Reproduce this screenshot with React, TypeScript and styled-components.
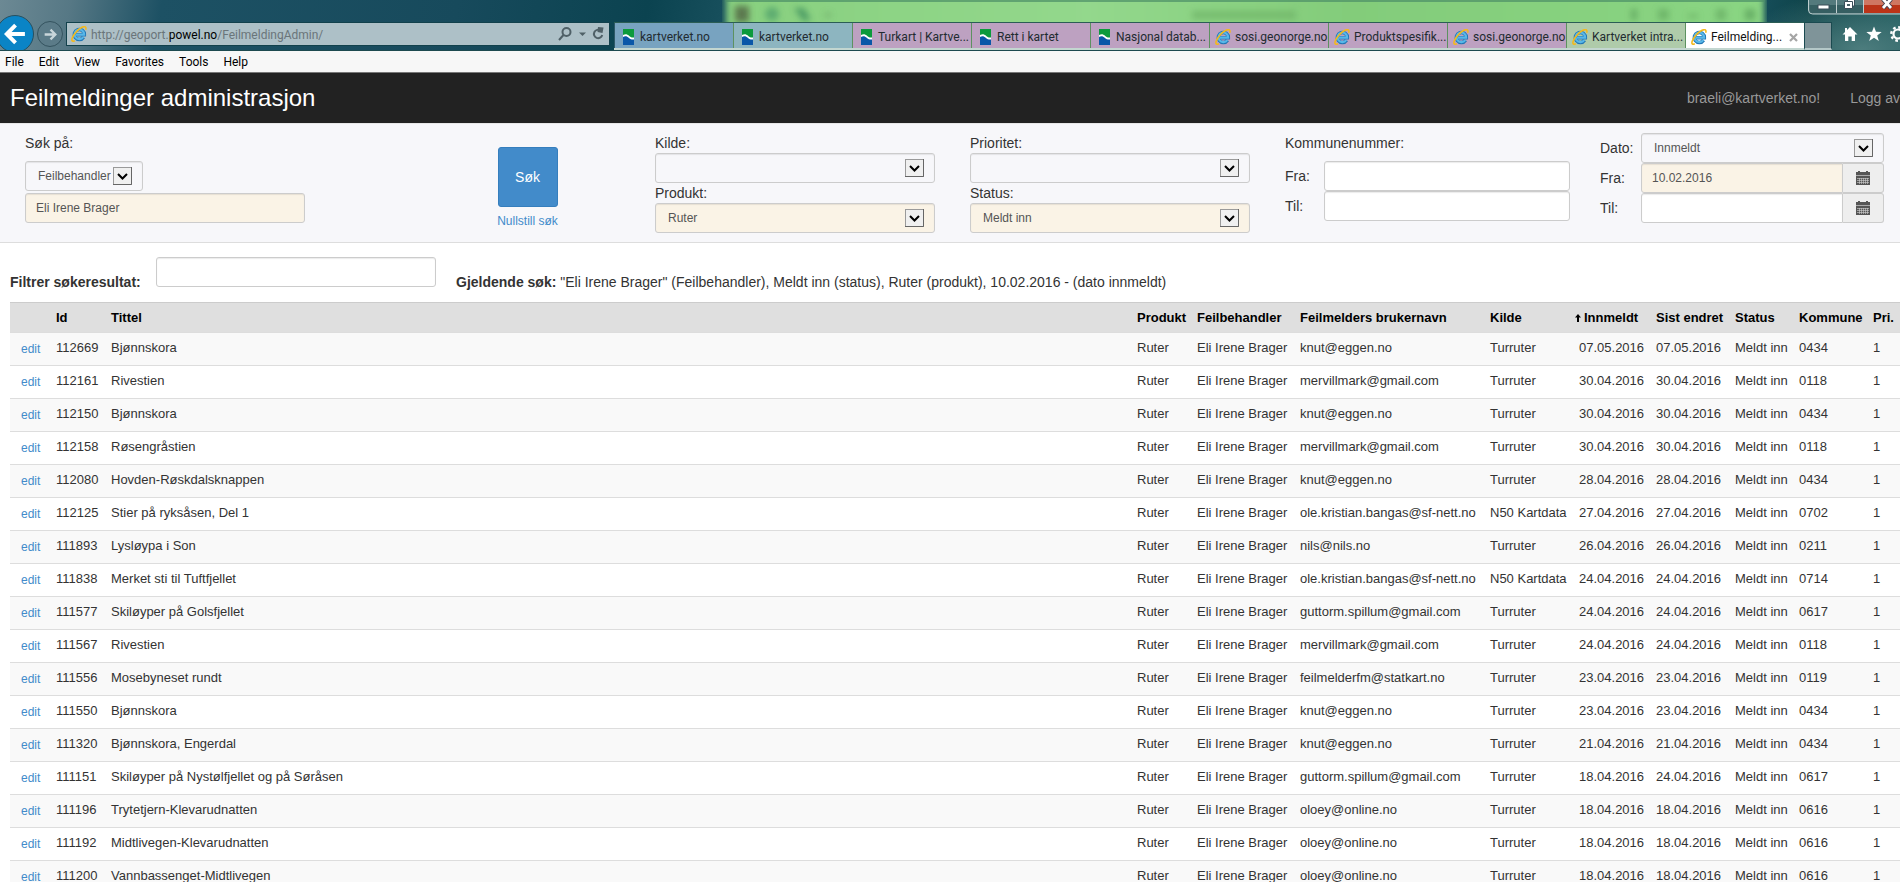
import React, { useState } from "react";
import styled, { createGlobalStyle, css } from "styled-components";

const GlobalStyle = createGlobalStyle`
  *, *::before, *::after { box-sizing: border-box; }
  body {
    margin: 0;
    background: #fff;
    color: #333;
    font-family: "Liberation Sans", Arial, sans-serif;
    font-size: 14px;
    line-height: 20px;
  }
  button, input, select { font-family: inherit; }
`;

/* ---------- browser frame ---------- */

const Page = styled.div`
  display: flex;
  flex-direction: column;
  height: 100vh;
  overflow: hidden;
`;

const Chrome = styled.header`
  position: relative;
  flex: none;
  display: flex;
  align-items: flex-end;
  height: 51px;
  padding-top: 22px;
  overflow: hidden;
  font-family: Roboto, "Open Sans", sans-serif;
  font-size: 12px;
  line-height: 16px;
  border-bottom: 1px solid #1d4a50;
  background:
    radial-gradient(ellipse 120px 60px at 98% 100%, #4d7d7e, transparent),
    linear-gradient(100deg, #6c8994 0, #567885 70px, #1d5164 160px, #174a5c 24%, #0b4350 34%, #174f5c 38%, #174f5c 92%, #0d4247 95%, #1c5a5c 100%);
`;

const Glass = styled.svg`
  position: absolute;
  left: 38%;
  top: 0;
  width: 55%;
  height: 50px;
`;

const NavButtons = styled.div`
  position: relative;
  flex: none;
  width: 66px;
  height: 28px;
`;

const RoundButton = styled.button<{ $main?: boolean }>`
  position: absolute;
  left: ${(p) => (p.$main ? "-4px" : "37px")};
  top: ${(p) => (p.$main ? "-7px" : "-1px")};
  display: grid;
  place-items: center;
  width: ${(p) => (p.$main ? 38 : 26)}px;
  height: ${(p) => (p.$main ? 38 : 26)}px;
  padding: 0;
  border: 1px solid ${(p) => (p.$main ? "#28505f" : "#34535f")};
  border-radius: 50%;
  background: ${(p) => (p.$main ? "#0a84c6" : "#5b7b88")};
`;

const AddressBar = styled.div`
  position: relative;
  flex: 1;
  display: flex;
  align-items: center;
  gap: 4px;
  min-width: 120px;
  height: 24px;
  margin: 0 4px 4px 0;
  padding: 0 5px 0 4px;
  border: 1px solid #12414c;
  background: #adc0c7;
`;

const Url = styled.div`
  flex: 1;
  padding-top: 2px;
  color: #6a757a;
  white-space: nowrap;
  overflow: hidden;

  b {
    font-weight: 400;
    color: #000;
  }
`;

const IconButton = styled.button`
  display: grid;
  place-items: center;
  flex: none;
  padding: 0;
  border: 0;
  background: none;
`;

const Tabs = styled.nav`
  position: relative;
  display: flex;
  height: 28px;
  border-top: 1px solid #2b5d55;
  border-bottom: 2px solid #c3d6d0;
`;

const tones = {
  blue: "#78a3c0",
  teal: "#8db5c0",
  mauve: "#bda1c1",
  green: "#afcbaa",
  active: "#ffffff",
};

const Tab = styled.a<{ $tone: keyof typeof tones }>`
  display: flex;
  align-items: center;
  gap: 4px;
  width: 119px;
  padding: 3px 0 0 5px;
  border-left: 1px solid ${(p) => (p.$tone === "blue" ? "#2d5968" : "#5d9160")};
  background: ${(p) => tones[p.$tone]};
  color: ${(p) => (p.$tone === "active" ? "#111" : "#222b30")};
  text-decoration: none;
  white-space: nowrap;

  svg { flex: none; }
`;

const TabClose = styled.button`
  display: grid;
  place-items: center;
  margin-left: auto;
  margin-right: 6px;
  padding: 0;
  border: 0;
  background: none;
`;

const NewTab = styled.button`
  position: relative;
  flex: none;
  width: 28px;
  height: 28px;
  padding: 0;
  border: 1px solid #1b4a50;
  border-bottom: 2px solid #b5c8c8;
  background: #7f9499;
`;

const Tools = styled.div`
  position: relative;
  flex: none;
  display: flex;
  align-items: center;
  gap: 8px;
  width: 68px;
  height: 28px;
  padding: 0 0 4px 10px;
  overflow: hidden;
`;

const WindowButtons = styled.svg`
  position: absolute;
  right: 0;
  top: 0;
  width: 94px;
  height: 16px;
`;

const MenuBar = styled.nav`
  flex: none;
  display: flex;
  align-items: center;
  gap: 15px;
  height: 22px;
  padding-left: 5px;
  border-bottom: 1px solid #777;
  background: #f7f7f7;
`;

const MenuItem = styled.button`
  padding: 0;
  border: 0;
  background: none;
  color: #000;
  font-family: Roboto, "Open Sans", sans-serif;
  font-size: 12px;
  line-height: 20px;
`;

/* ---------- application ---------- */

const Navbar = styled.div`
  flex: none;
  display: flex;
  align-items: center;
  gap: 30px;
  height: 50px;
  padding-left: 10px;
  background: #222;
`;

const Brand = styled.h1`
  flex: 1;
  margin: 0;
  padding-bottom: 1px;
  color: #fff;
  font-size: 24px;
  font-weight: 400;
  line-height: 30px;
`;

const NavLink = styled.a`
  color: #999;
  text-decoration: none;
  white-space: nowrap;
`;

const SearchPanel = styled.form`
  flex: none;
  display: grid;
  grid-template-columns: repeat(6, 1fr);
  padding: 9px 0 9px 10px;
  border-top: 1px solid #e7e7e7;
  border-bottom: 1px solid #ddd;
  background: #f7f7fa;
`;

const Column = styled.div`
  display: flex;
  flex-direction: column;
  align-items: stretch;
  padding: 0 20px 0 15px;
`;

const ActionColumn = styled(Column)`
  align-items: center;
  gap: 4px;
  padding: 14px 0 0 90px;
`;

const NumberColumn = styled(Column)`
  padding-right: 15px;
`;

const DateColumn = styled(Column)`
  padding-right: 16px;
`;

const Label = styled.label`
  height: 20px;
`;

const Stack = styled.div<{ $gap?: number }>`
  display: flex;
  flex-direction: column;
  align-items: stretch;
  gap: ${(p) => p.$gap ?? 0}px;
  margin-top: 8px;
`;

const Line = styled.div<{ $label: number }>`
  display: grid;
  grid-template-columns: ${(p) => p.$label}px 1fr;
  align-items: center;
`;

const field = css<{ $filled?: boolean }>`
  height: 30px;
  border: 1px solid #ccc;
  border-radius: 3px;
  box-shadow: inset 0 1px 1px rgba(0, 0, 0, 0.08);
  color: #555;
  font-size: 12px;
  line-height: 18px;
  outline: none;
`;

const TextInput = styled.input<{ $filled?: boolean }>`
  ${field}
  width: 100%;
  min-width: 0;
  padding: 4px 10px 5px;
  background: ${(p) => (p.$filled ? "#faf3e6" : "#fff")};
`;

const SelectBox = styled.div<{ $fit?: boolean }>`
  position: relative;
  display: flex;
  width: ${(p) => (p.$fit ? "118px" : "auto")};

  svg {
    position: absolute;
    right: 11px;
    top: 6px;
    pointer-events: none;
  }
`;

const SelectInput = styled.select<{ $filled?: boolean }>`
  ${field}
  appearance: none;
  width: 100%;
  padding: 4px 30px 5px 12px;
  background: ${(p) => (p.$filled ? "#faf3e6" : "#f7f7fa")};
`;

const InputGroup = styled.div`
  display: flex;

  ${TextInput} {
    flex: 1;
    border-radius: 3px 0 0 3px;
  }
`;

const Addon = styled.button`
  display: grid;
  place-items: center;
  width: 41px;
  height: 30px;
  padding: 0;
  border: 1px solid #ccc;
  border-left: 0;
  border-radius: 0 3px 3px 0;
  background: #eee;
`;

const SearchButton = styled.button`
  width: 60px;
  height: 60px;
  border: 1px solid #357ebd;
  border-radius: 3px;
  background: #428bca;
  color: #fff;
  font-size: 14px;
`;

const SmallLink = styled.a`
  color: #428bca;
  font-size: 12px;
  text-decoration: none;
`;

const FilterBar = styled.div`
  flex: none;
  display: flex;
  align-items: flex-end;
  height: 59px;
  padding: 0 10px 15px;
`;

const FilterLabel = styled.label`
  width: 146px;
  height: 15px;
  font-weight: 700;
  white-space: nowrap;
`;

const FilterInput = styled.div`
  width: 280px;
  height: 30px;
`;

const Summary = styled.p`
  height: 15px;
  margin: 0 0 0 20px;
  white-space: nowrap;
`;

const TableWrap = styled.main`
  flex: 1;
  min-height: 0;
  padding-left: 10px;
  overflow: hidden;
`;

const Table = styled.table`
  width: 100%;
  table-layout: fixed;
  border-collapse: separate;
  border-spacing: 0;
  font-size: 13px;
  white-space: nowrap;
`;

const Th = styled.th<{ $sorted?: boolean }>`
  height: 30px;
  padding: 5px 0 4px ${(p) => (p.$sorted ? 1 : 5)}px;
  border-top: 1px solid #ccc;
  background: #dfdfdf;
  color: #000;
  text-align: left;

  svg { margin-right: 3px; }
`;

const Row = styled.tr`
  &:nth-child(odd) { background: #f9f9f9; }
`;

const Td = styled.td`
  height: 33px;
  padding: 5px 0 7px 5px;
  border-top: 1px solid #ddd;
`;

const EditCell = styled(Td)`
  padding: 6px 0 6px 11px;
`;

/* ---------- icons ---------- */

const KartverketIcon = () => (
  <svg width="16" height="16" viewBox="0 0 16 16" aria-hidden="true">
    <path d="M3 0h11v16H3z" fill="#fff" />
    <path d="M3 0h11v8.500c-2.500.3-3.600-.5-5-1.700C7 5 5.500 4.800 3 6z" fill="#0c9a3c" />
    <path d="M3 8c2.500-1.200 4-.6 6 1 1.500 1.300 3 1.800 5 1.500V16H3z" fill="#0a57a8" />
  </svg>
);

const IeIcon = () => (
  <svg width="16" height="16" viewBox="0 0 16 16" fill="none" aria-hidden="true">
    <path d="M12.500 11.200A5 5 0 1 1 13.300 8.700H4.500" stroke="#2277b5" strokeWidth="3.600" />
    <path d="M12.300 11A4.800 4.800 0 1 1 13.100 8.700H5" stroke="#58b7e8" strokeWidth="2.200" />
    <path d="M3.800 14.800C1.500 16 .2 14.800 1.300 12 2.600 8.500 7 3.300 11 1.300c3-1.400 4.600-.6 3.700 2.400" stroke="#f3b91c" strokeWidth="1.600" />
  </svg>
);

const Arrow = ({ size, flip, color }: { size: number; flip?: boolean; color: string }) => (
  <svg width={size} height={size} viewBox="0 0 20 20" fill="none" stroke={color} strokeWidth="3.600" aria-hidden="true">
    {flip ? <path d="M1 10h16M10 2.500l7.500 7.500-7.500 7.500" /> : <path d="M19 10H3M10.500 2L2.500 10l8 8" />}
  </svg>
);

const DropArrow = () => (
  <svg width="19" height="18" viewBox="0 0 19 18" fill="none" aria-hidden="true">
    <rect x=".5" y=".5" width="18" height="17" fill="#f0f0f0" stroke="#9a9a9a" />
    <path d="M18.500 0v17.500H0" stroke="#666" />
    <path d="M5 7l4.500 4.500L14 7" stroke="#000" strokeWidth="2" />
  </svg>
);

const CalendarIcon = () => (
  <svg width="14" height="14" viewBox="0 0 14 14" aria-hidden="true">
    <path d="M0 1h2V0h2v1h6V0h2v1h2v3H0z" fill="#555" />
    <path d="M0 4h14v1H0z" fill="#aaa" />
    <path d="M0 5h14v9H0z" fill="#555" />
    <path d="M1 7.500h12M1 9.500h12M1 11.500h12M3.500 7v6M5.500 7v6M7.500 7v6M9.500 7v6M11.500 7v6" stroke="#d0d0d0" strokeWidth=".6" />
  </svg>
);

const SortIcon = () => (
  <svg width="6" height="8" viewBox="0 0 6 8" aria-hidden="true">
    <path d="M3 0l3 3.500H4V8H2V3.500H0z" fill="#000" />
  </svg>
);

/* ---------- data ---------- */

const tabs: { title: string; tone: keyof typeof tones; ie?: boolean }[] = [
  { title: "kartverket.no", tone: "blue" },
  { title: "kartverket.no", tone: "teal" },
  { title: "Turkart | Kartve...", tone: "mauve" },
  { title: "Rett i kartet", tone: "mauve" },
  { title: "Nasjonal datab...", tone: "mauve" },
  { title: "sosi.geonorge.no", tone: "mauve", ie: true },
  { title: "Produktspesifik...", tone: "mauve", ie: true },
  { title: "sosi.geonorge.no", tone: "mauve", ie: true },
  { title: "Kartverket intra...", tone: "green", ie: true },
  { title: "Feilmelding...", tone: "active", ie: true },
];

const columns: { title: string; width?: number }[] = [
  { title: "", width: 41 },
  { title: "Id", width: 55 },
  { title: "Tittel" },
  { title: "Produkt", width: 60 },
  { title: "Feilbehandler", width: 103 },
  { title: "Feilmelders brukernavn", width: 190 },
  { title: "Kilde", width: 89 },
  { title: "Innmeldt", width: 77 },
  { title: "Sist endret", width: 79 },
  { title: "Status", width: 64 },
  { title: "Kommune", width: 74 },
  { title: "Pri.", width: 32 },
];

/* id, title, user, source, reported, changed, municipality */
const reports: string[][] = [
  ["112669", "Bjønnskora", "knut@eggen.no", "Turruter", "07.05.2016", "07.05.2016", "0434"],
  ["112161", "Rivestien", "mervillmark@gmail.com", "Turruter", "30.04.2016", "30.04.2016", "0118"],
  ["112150", "Bjønnskora", "knut@eggen.no", "Turruter", "30.04.2016", "30.04.2016", "0434"],
  ["112158", "Røsengråstien", "mervillmark@gmail.com", "Turruter", "30.04.2016", "30.04.2016", "0118"],
  ["112080", "Hovden-Røskdalsknappen", "knut@eggen.no", "Turruter", "28.04.2016", "28.04.2016", "0434"],
  ["112125", "Stier på ryksåsen, Del 1", "ole.kristian.bangas@sf-nett.no", "N50 Kartdata", "27.04.2016", "27.04.2016", "0702"],
  ["111893", "Lysløypa i Son", "nils@nils.no", "Turruter", "26.04.2016", "26.04.2016", "0211"],
  ["111838", "Merket sti til Tuftfjellet", "ole.kristian.bangas@sf-nett.no", "N50 Kartdata", "24.04.2016", "24.04.2016", "0714"],
  ["111577", "Skiløyper på Golsfjellet", "guttorm.spillum@gmail.com", "Turruter", "24.04.2016", "24.04.2016", "0617"],
  ["111567", "Rivestien", "mervillmark@gmail.com", "Turruter", "24.04.2016", "24.04.2016", "0118"],
  ["111556", "Mosebyneset rundt", "feilmelderfm@statkart.no", "Turruter", "23.04.2016", "23.04.2016", "0119"],
  ["111550", "Bjønnskora", "knut@eggen.no", "Turruter", "23.04.2016", "23.04.2016", "0434"],
  ["111320", "Bjønnskora, Engerdal", "knut@eggen.no", "Turruter", "21.04.2016", "21.04.2016", "0434"],
  ["111151", "Skiløyper på Nystølfjellet og på Søråsen", "guttorm.spillum@gmail.com", "Turruter", "18.04.2016", "24.04.2016", "0617"],
  ["111196", "Trytetjern-Klevarudnatten", "oloey@online.no", "Turruter", "18.04.2016", "18.04.2016", "0616"],
  ["111192", "Midtlivegen-Klevarudnatten", "oloey@online.no", "Turruter", "18.04.2016", "18.04.2016", "0616"],
  ["111200", "Vannbassenget-Midtlivegen", "oloey@online.no", "Turruter", "18.04.2016", "18.04.2016", "0616"],
];

/* ---------- parts ---------- */

function Select({ id, value, fit, filled }: { id: string; value: string; fit?: boolean; filled?: boolean }) {
  return (
    <SelectBox $fit={fit}>
      <SelectInput id={id} $filled={filled}>
        <option>{value}</option>
      </SelectInput>
      <DropArrow />
    </SelectBox>
  );
}

function BrowserFrame() {
  return (
    <>
      <Chrome>
        <Glass viewBox="0 0 1045 50" preserveAspectRatio="none" aria-hidden="true">
          <defs>
            <filter id="soft" x="-5%" y="-60%" width="110%" height="220%">
              <feGaussianBlur stdDeviation="3" />
            </filter>
            <linearGradient id="window" x1="0" x2="1" y1="0" y2="0">
              <stop offset="0" stopColor="#88d07f" />
              <stop offset=".35" stopColor="#93d88c" />
              <stop offset=".6" stopColor="#83cc7a" />
              <stop offset="1" stopColor="#8ad583" />
            </linearGradient>
          </defs>
          <rect x="4" y="-12" width="1038" height="83" fill="url(#window)" filter="url(#soft)" />
          <path d="M4 0h1038v2H4z" fill="#4b8f66" opacity=".7" />
          <g filter="url(#soft)" opacity=".75">
            <rect x="13" y="6" width="14" height="16" fill="#4d5c3c" />
            <circle cx="50" cy="14" r="7" fill="#4fa06a" />
            <path d="M72 8h10l7 12-8 1z" fill="#3b8c5c" />
            <rect x="103" y="13" width="6" height="4" fill="#6aa565" />
            <rect x="470" y="11" width="104" height="8" fill="#6fb468" />
            <rect x="909" y="9" width="6" height="11" fill="#5ba35b" />
            <rect x="936" y="9" width="11" height="11" fill="#68ae63" />
            <rect x="966" y="14" width="10" height="4" fill="#68ae63" />
            <rect x="994" y="9" width="10" height="11" fill="#68ae63" />
            <rect x="1023" y="9" width="10" height="11" fill="#5ba35b" />
          </g>
        </Glass>
        <NavButtons>
          <RoundButton $main aria-label="Back"><Arrow size={22} color="#fff" /></RoundButton>
          <RoundButton aria-label="Forward"><Arrow size={13} flip color="#c9d6da" /></RoundButton>
        </NavButtons>
        <AddressBar>
          <IeIcon />
          <Url>http://geoport.<b>powel.no</b>/FeilmeldingAdmin/</Url>
          <IconButton aria-label="Search">
            <svg width="14" height="14" viewBox="0 0 14 14" fill="none" stroke="#4f6067" strokeWidth="2">
              <circle cx="8.500" cy="5" r="4" />
              <path d="M5.500 8L1 13" />
            </svg>
          </IconButton>
          <IconButton aria-label="Show address bar history">
            <svg width="12" height="14" viewBox="0 0 12 14"><path d="M3 5.500h7L6.500 9z" fill="#4f6067" /></svg>
          </IconButton>
          <IconButton aria-label="Refresh">
            <svg width="12" height="14" viewBox="0 0 12 14" fill="none">
              <path d="M8.500 3.500A4.200 4.200 0 1 0 10.200 8" stroke="#4f6067" strokeWidth="2" />
              <path d="M6 0l5.500.5L10.500 6 5.500 5z" fill="#4f6067" />
            </svg>
          </IconButton>
        </AddressBar>
        <Tabs aria-label="Tabs">
          {tabs.map((tab, i) => (
            <Tab key={i} href="#" $tone={tab.tone}>
              {tab.ie ? <IeIcon /> : <KartverketIcon />}
              {tab.title}
              {tab.tone === "active" && (
                <TabClose aria-label="Close tab">
                  <svg width="9" height="9" viewBox="0 0 9 9" stroke="#a5a5a5" strokeWidth="2.200"><path d="M1 1l7 7M8 1L1 8" /></svg>
                </TabClose>
              )}
            </Tab>
          ))}
        </Tabs>
        <NewTab aria-label="New tab" />
        <Tools>
          <IconButton aria-label="Home">
            <svg width="16" height="16" viewBox="0 0 16 16"><path d="M8 1l7.500 7.500H13V15H9.700v-4.500H6.300V15H3V8.500H.5L3 6V2h2v2z" fill="#fff" /></svg>
          </IconButton>
          <IconButton aria-label="Favorites">
            <svg width="16" height="16" viewBox="0 0 16 16"><path d="M8 .5l2 5.300 5.700.2-4.500 3.500 1.600 5.500L8 11.800 3.200 15l1.600-5.500L.3 6 6 5.800z" fill="#fff" /></svg>
          </IconButton>
          <IconButton aria-label="Tools">
            <svg width="16" height="16" viewBox="0 0 16 16" fill="none" stroke="#fff">
              <circle cx="8" cy="8" r="4.500" strokeWidth="2.200" />
              <circle cx="8" cy="8" r="6.700" strokeWidth="2.400" strokeDasharray="2.630 2.630" />
            </svg>
          </IconButton>
        </Tools>
        <WindowButtons viewBox="0 0 94 16" aria-hidden="true">
          <path d="M2.500-1v11q0 4 4 4H95V-1z" fill="#547a7d" stroke="#bccdce" />
          <path d="M3.500 5h27v8H6q-2.500 0-2.500-3zM31 5h27v8H31z" fill="#234d50" opacity=".6" />
          <path d="M58 0h36v5H58z" fill="#cf7762" />
          <path d="M58 5h36v8H58z" fill="#bb3418" />
          <path d="M30.500 0v13M57.500 0v13" stroke="#c0cfd0" />
          <rect x="12" y="5" width="11" height="4" fill="#fff" stroke="#3a4d58" />
          <path d="M41.500-1h7v7h-7z" fill="#fff" stroke="#3a4d58" />
          <path d="M38.500 1.500h8v7h-8z" fill="#fff" stroke="#3a4d58" />
          <rect x="41" y="4" width="3" height="2" fill="#4a6268" />
          <path d="M77-1l8 9M85-1l-8 9" stroke="#3f3f50" strokeWidth="4.500" />
          <path d="M77-1l8 9M85-1l-8 9" stroke="#fff" strokeWidth="2.800" />
        </WindowButtons>
      </Chrome>
      <MenuBar aria-label="Menu">
        {["File", "Edit", "View", "Favorites", "Tools", "Help"].map((item) => (
          <MenuItem key={item}>{item}</MenuItem>
        ))}
      </MenuBar>
    </>
  );
}

function SearchForm() {
  return (
    <SearchPanel onSubmit={(e) => e.preventDefault()}>
      <Column>
        <Label htmlFor="sok-pa">Søk på:</Label>
        <Stack $gap={2}>
          <Select id="sok-pa" value="Feilbehandler" fit />
          <TextInput aria-label="Søkeverdi" defaultValue="Eli Irene Brager" $filled />
        </Stack>
      </Column>
      <ActionColumn>
        <SearchButton type="submit">Søk</SearchButton>
        <SmallLink href="#">Nullstill søk</SmallLink>
      </ActionColumn>
      <Column>
        <Label htmlFor="kilde">Kilde:</Label>
        <Select id="kilde" value="" />
        <Label htmlFor="produkt">Produkt:</Label>
        <Select id="produkt" value="Ruter" filled />
      </Column>
      <Column>
        <Label htmlFor="prioritet">Prioritet:</Label>
        <Select id="prioritet" value="" />
        <Label htmlFor="status">Status:</Label>
        <Select id="status" value="Meldt inn" filled />
      </Column>
      <NumberColumn role="group" aria-label="Kommunenummer">
        <Label as="div">Kommunenummer:</Label>
        <Stack>
          <Line $label={39}>
            <Label htmlFor="kommune-fra">Fra:</Label>
            <TextInput id="kommune-fra" />
          </Line>
          <Line $label={39}>
            <Label htmlFor="kommune-til">Til:</Label>
            <TextInput id="kommune-til" />
          </Line>
        </Stack>
      </NumberColumn>
      <DateColumn role="group" aria-label="Dato">
        <Line $label={41}>
          <Label htmlFor="dato">Dato:</Label>
          <Select id="dato" value="Innmeldt" />
        </Line>
        <Line $label={41}>
          <Label htmlFor="dato-fra">Fra:</Label>
          <InputGroup>
            <TextInput id="dato-fra" defaultValue="10.02.2016" $filled />
            <Addon type="button" aria-label="Velg fra-dato"><CalendarIcon /></Addon>
          </InputGroup>
        </Line>
        <Line $label={41}>
          <Label htmlFor="dato-til">Til:</Label>
          <InputGroup>
            <TextInput id="dato-til" />
            <Addon type="button" aria-label="Velg til-dato"><CalendarIcon /></Addon>
          </InputGroup>
        </Line>
      </DateColumn>
    </SearchPanel>
  );
}

export default function App() {
  const [filter, setFilter] = useState("");
  const shown = reports.filter((r) => r.join(" ").toLowerCase().includes(filter.toLowerCase()));

  return (
    <Page>
      <GlobalStyle />
      <BrowserFrame />
      <Navbar>
        <Brand>Feilmeldinger administrasjon</Brand>
        <NavLink href="#">braeli@kartverket.no!</NavLink>
        <NavLink href="#">Logg av</NavLink>
      </Navbar>
      <SearchForm />
      <FilterBar>
        <FilterLabel htmlFor="filter">Filtrer søkeresultat:</FilterLabel>
        <FilterInput>
          <TextInput id="filter" value={filter} onChange={(e) => setFilter(e.target.value)} />
        </FilterInput>
        <Summary>
          <b>Gjeldende søk:</b> "Eli Irene Brager" (Feilbehandler), Meldt inn (status), Ruter (produkt), 10.02.2016 - (dato innmeldt)
        </Summary>
      </FilterBar>
      <TableWrap>
        <Table>
          <colgroup>
            {columns.map((c) => <col key={c.title} width={c.width} />)}
          </colgroup>
          <thead>
            <tr>
              {columns.map((c) => (
                <Th key={c.title} scope="col" $sorted={c.title === "Innmeldt"}>
                  {c.title === "Innmeldt" && <SortIcon />}
                  {c.title}
                </Th>
              ))}
            </tr>
          </thead>
          <tbody>
            {shown.map(([id, title, user, source, reported, changed, municipality]) => (
              <Row key={id}>
                <EditCell><SmallLink href="#">edit</SmallLink></EditCell>
                <Td>{id}</Td>
                <Td>{title}</Td>
                <Td>Ruter</Td>
                <Td>Eli Irene Brager</Td>
                <Td>{user}</Td>
                <Td>{source}</Td>
                <Td>{reported}</Td>
                <Td>{changed}</Td>
                <Td>Meldt inn</Td>
                <Td>{municipality}</Td>
                <Td>1</Td>
              </Row>
            ))}
          </tbody>
        </Table>
      </TableWrap>
    </Page>
  );
}
